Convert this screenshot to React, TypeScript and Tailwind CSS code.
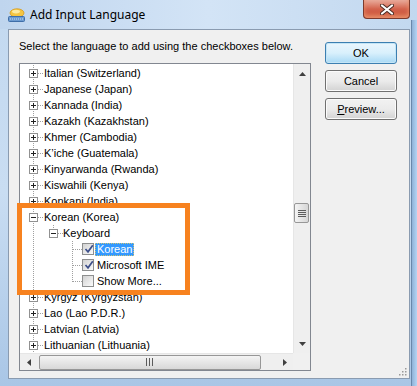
type Kind = 'plus' | 'minus' | 'check' | 'box';

type Row = {
  label: string;
  level: 0 | 1 | 2;
  kind: Kind;
  line?: 'full' | 'top';
  selected?: boolean;
};

const rows: Row[] = [
  { label: 'Italian (Switzerland)', level: 0, kind: 'plus' },
  { label: 'Japanese (Japan)', level: 0, kind: 'plus' },
  { label: 'Kannada (India)', level: 0, kind: 'plus' },
  { label: 'Kazakh (Kazakhstan)', level: 0, kind: 'plus' },
  { label: 'Khmer (Cambodia)', level: 0, kind: 'plus' },
  { label: 'K\u2019iche (Guatemala)', level: 0, kind: 'plus' },
  { label: 'Kinyarwanda (Rwanda)', level: 0, kind: 'plus' },
  { label: 'Kiswahili (Kenya)', level: 0, kind: 'plus' },
  { label: 'Konkani (India)', level: 0, kind: 'plus' },
  { label: 'Korean (Korea)', level: 0, kind: 'minus' },
  { label: 'Keyboard', level: 1, kind: 'minus' },
  { label: 'Korean', level: 2, kind: 'check', line: 'full', selected: true },
  { label: 'Microsoft IME', level: 2, kind: 'check', line: 'full' },
  { label: 'Show More...', level: 2, kind: 'box', line: 'top' },
  { label: 'Kyrgyz (Kyrgyzstan)', level: 0, kind: 'plus' },
  { label: 'Lao (Lao P.D.R.)', level: 0, kind: 'plus' },
  { label: 'Latvian (Latvia)', level: 0, kind: 'plus' },
  { label: 'Lithuanian (Lithuania)', level: 0, kind: 'plus' },
];

const dot = { stroke: '#a0a0a0', strokeWidth: 1, strokeDasharray: '1 1' };

function ExpandBox({ x, open }: { x: number; open: boolean }) {
  return (
    <g shapeRendering="crispEdges">
      <rect x={x + 0.5} y={4.5} width={8} height={8} fill="#fff" stroke="#919191" />
      <line x1={x + 2} y1={8.5} x2={x + 7} y2={8.5} stroke="#222" />
      {!open && <line x1={x + 4.5} y1={6} x2={x + 4.5} y2={11} stroke="#222" />}
    </g>
  );
}

function Guides({ row }: { row: Row }) {
  const w = row.level === 0 ? 24 : row.level === 1 ? 43 : 62;
  return (
    <svg width={w} height={16} className="shrink-0">
      <line x1={13.5} y1={0} x2={13.5} y2={16} {...dot} />
      {row.level === 0 && (
        <>
          <line x1={18} y1={8.5} x2={24} y2={8.5} {...dot} />
          <ExpandBox x={9} open={row.kind === 'minus'} />
        </>
      )}
      {row.level === 1 && (
        <>
          <line x1={33.5} y1={0} x2={33.5} y2={4} {...dot} />
          <line x1={38} y1={8.5} x2={43} y2={8.5} {...dot} />
          <ExpandBox x={29} open />
        </>
      )}
      {row.level === 2 && (
        <>
          <line x1={52.5} y1={0} x2={52.5} y2={row.line === 'full' ? 16 : 9} {...dot} />
          <line x1={53} y1={8.5} x2={62} y2={8.5} {...dot} />
        </>
      )}
    </svg>
  );
}

function CheckBox({ checked }: { checked: boolean }) {
  return (
    <span className="relative flex h-[12px] w-[12px] shrink-0 items-center justify-center border border-[#8e8f8f] bg-gradient-to-br from-[#d2d2d2] to-[#fbfbfb]">
      {checked && (
        <svg width="10" height="10" viewBox="0 0 10 10" className="absolute left-[1px] top-0">
          <path d="M1.5 5 L4 7.8 L8.8 1.2" fill="none" stroke="#3d4f8a" strokeWidth="1.7" />
        </svg>
      )}
    </span>
  );
}

function TreeRow({ row }: { row: Row }) {
  return (
    <div className="flex h-4 items-center whitespace-nowrap">
      <Guides row={row} />
      {row.level === 2 && <CheckBox checked={row.kind === 'check'} />}
      <span
        className={
          row.selected
            ? 'ml-[1px] h-[13px] border border-dotted border-[#c9c37a] bg-[#3399ff] px-[1px] leading-[11px] text-white'
            : row.level === 2
              ? 'ml-[3px] leading-[13px]'
              : 'leading-[13px]'
        }
      >
        {row.label}
      </span>
    </div>
  );
}

function Arrow({ dir }: { dir: 'up' | 'down' | 'left' | 'right' }) {
  const pts = {
    up: '0,4 7,4 3.5,0',
    down: '0,0 7,0 3.5,4',
    left: '4,0 4,7 0,3.5',
    right: '0,0 0,7 4,3.5',
  }[dir];
  const vertical = dir === 'up' || dir === 'down';
  return (
    <svg width={vertical ? 7 : 4} height={vertical ? 4 : 7}>
      <polygon points={pts} fill="#404040" />
    </svg>
  );
}

function Grip({ vertical }: { vertical: boolean }) {
  return (
    <svg width={vertical ? 8 : 8} height={vertical ? 7 : 8}>
      {vertical
        ? [0, 2, 4, 6].map((y) => <line key={y} x1={0} y1={y + 0.5} x2={8} y2={y + 0.5} stroke="#5c5c5c" />)
        : [0, 3, 6].map((x) => <line key={x} x1={x + 0.5} y1={0} x2={x + 0.5} y2={8} stroke="#5c5c5c" />)}
    </svg>
  );
}

function WinButton({ label, isDefault, underline }: { label: string; isDefault?: boolean; underline?: boolean }) {
  return (
    <button
      className={
        'h-[22px] w-[72px] rounded-[3px] border text-[11px] leading-none text-black ' +
        (isDefault
          ? 'border-[#3c7fb1] bg-gradient-to-b from-[#eaf6fd] via-[#d9f0fc] to-[#a7d9f5] shadow-[inset_0_0_0_1px_#c4e5f6]'
          : 'border-[#707070] bg-gradient-to-b from-[#f2f2f2] via-[#ebebeb] to-[#d3d3d3] shadow-[inset_0_0_0_1px_#fbfbfb]')
      }
    >
      {underline ? (
        <>
          <span className="underline">{label[0]}</span>
          {label.slice(1)}
        </>
      ) : (
        label
      )}
    </button>
  );
}

export default function App() {
  return (
    <div className="relative h-[386px] w-[417px] overflow-hidden bg-gradient-to-b from-[#c3d9f0] via-[#c9ddf2] to-[#a9c6e6] font-['Liberation_Sans',sans-serif] text-[11px] text-black">
      {/* Title bar */}
      <div className="flex h-[29px] items-center gap-[5px] bg-gradient-to-r from-[#bfd5ee] via-[#d3e4f6] to-[#c2d8ef] pl-[8px]">
        <svg width="17" height="16" viewBox="0 0 17 16">
          <ellipse cx="9" cy="6" rx="7" ry="4.2" fill="#f5c542" stroke="#d59a1d" strokeWidth="0.8" />
          <ellipse cx="8" cy="4.6" rx="4" ry="1.8" fill="#fdeaa0" />
          <rect x="0.5" y="9.5" width="16" height="5" rx="1" fill="#6d9bd0" stroke="#3f6ea8" />
          <line x1="2" y1="12" x2="15" y2="12" stroke="#c7dcf2" strokeDasharray="1 1" />
        </svg>
        <span className="font-['Noto_Sans',sans-serif] text-[12px] leading-none text-black">Add Input Language</span>
      </div>
      <div className="absolute right-[7px] top-0 flex h-[19px] w-[47px] items-center justify-center rounded-b-[4px] border border-t-0 border-[#7b3a2d] bg-gradient-to-b from-[#e8ab9c] via-[#d3624c] to-[#c44a30] shadow-[inset_0_-3px_4px_#e98f6a]">
        <svg width="14" height="11" viewBox="0 0 14 11">
          <path d="M2 1.5 L12 9.5 M12 1.5 L2 9.5" stroke="#4a2a22" strokeWidth="4" strokeLinecap="round" />
          <path d="M2 1.5 L12 9.5 M12 1.5 L2 9.5" stroke="#ffffff" strokeWidth="2.2" strokeLinecap="round" />
        </svg>
      </div>

      {/* Client area */}
      <div className="ml-[8px] flex h-[350px] w-[402px] border border-[#8a9bb0] bg-[#f0f0f0]">
        <div className="flex flex-col pl-[10px] pt-[10px]">
          <div className="h-[13px] leading-[13px]">Select the language to add using the checkboxes below.</div>
          <div className="mt-[10px] grid h-[308px] w-[292px] grid-cols-[1fr_17px] grid-rows-[1fr_17px] border border-[#828790] bg-white">
            <div className="overflow-hidden pt-[1px]">
              {rows.map((r) => (
                <TreeRow key={r.label} row={r} />
              ))}
            </div>
            <div className="flex flex-col border-l border-[#e6e6e6] bg-[#efefef]">
              <div className="flex h-[17px] items-center justify-center pt-[3px]">
                <Arrow dir="up" />
              </div>
              <div className="h-[122px]" />
              <div className="flex h-[20px] w-[15px] items-center justify-center rounded-[2px] border border-[#979797] bg-gradient-to-r from-[#f4f4f4] to-[#d6d6d6]">
                <Grip vertical />
              </div>
              <div className="flex-1" />
              <div className="flex h-[17px] items-center justify-center pb-[1px]">
                <Arrow dir="down" />
              </div>
            </div>
            <div className="flex items-center border-t border-[#e6e6e6] bg-[#efefef]">
              <div className="flex h-full w-[17px] items-center justify-center">
                <Arrow dir="left" />
              </div>
              <div className="ml-[2px] flex h-[15px] w-[222px] items-center justify-center rounded-[2px] border border-[#979797] bg-gradient-to-b from-[#f4f4f4] to-[#d8d8d8]">
                <Grip vertical={false} />
              </div>
              <div className="flex-1" />
              <div className="flex h-full w-[17px] items-center justify-center">
                <Arrow dir="right" />
              </div>
            </div>
            <div className="bg-[#f0f0f0]" />
          </div>
        </div>
        <div className="ml-[14px] flex flex-col gap-[6px] pt-[12px]">
          <WinButton label="OK" isDefault />
          <WinButton label="Cancel" />
          <WinButton label="Preview..." underline />
        </div>
      </div>

      {/* Size grip */}
      <svg width="9" height="9" className="absolute left-[398px] top-[367px]">
        {[
          [7, 1],
          [4, 4],
          [7, 4],
          [1, 7],
          [4, 7],
          [7, 7],
        ].map(([x, y]) => (
          <rect key={`${x}-${y}`} x={x} y={y} width={1.5} height={1.5} fill="#9a9a9a" />
        ))}
      </svg>

      {/* Right frame edge */}
      <div className="absolute right-0 top-[20px] h-[366px] w-[6px] border-l border-[#6a88ab] bg-gradient-to-r from-[#8fb2d8] to-[#b5d4f3]" />

      {/* Annotation box */}
      <div className="pointer-events-none absolute left-[17px] top-[203px] h-[92px] w-[173px] border-[5px] border-[#f7821f]" />
    </div>
  );
}
